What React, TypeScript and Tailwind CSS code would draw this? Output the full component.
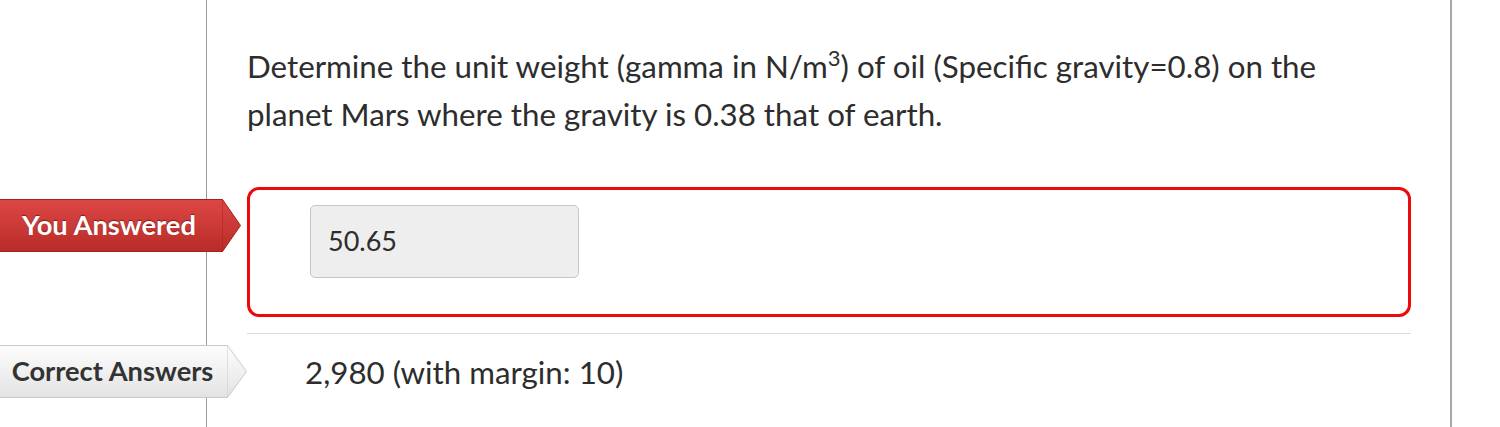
import React from "react";

function Badge({
  label,
  variant,
}: {
  label: string;
  variant: "red" | "gray";
}) {
  const red = variant === "red";
  return (
    <div className="flex h-[53px] items-stretch">
      <div
        className={
          red
            ? "flex w-[222px] items-center justify-center border-y border-[#a5201d] bg-gradient-to-b from-[#dc4744] to-[#b92c29] pr-[4px] text-[27.3px] font-bold text-white [text-shadow:0_-1px_1px_rgba(90,0,0,0.6)]"
            : "flex w-[233px] items-center justify-center border-y border-[#c9c9c9] bg-gradient-to-b from-[#fdfdfd] to-[#e3e3e3] pr-[2px] text-[27.3px] font-bold text-[#333333]"
        }
      >
        {label}
      </div>
      <svg
        width={red ? 19 : 20}
        height={53}
        viewBox={red ? "0 0 19 53" : "0 0 20 53"}
        className="block shrink-0"
      >
        <defs>
          <linearGradient id={`g-${variant}`} x1="0" y1="0" x2="0" y2="1">
            <stop offset="0" stopColor={red ? "#dc4744" : "#fdfdfd"} />
            <stop offset="1" stopColor={red ? "#b92c29" : "#e3e3e3"} />
          </linearGradient>
        </defs>
        {red ? (
          <polygon
            points="0,0.5 0.5,0.5 18.5,26.5 0.5,52.5 0,52.5"
            fill={`url(#g-${variant})`}
            stroke="#a5201d"
            strokeWidth="1"
          />
        ) : (
          <polygon
            points="0,0.5 0.5,0.5 19.5,26.5 0.5,52.5 0,52.5"
            fill={`url(#g-${variant})`}
            stroke="#c9c9c9"
            strokeWidth="1"
          />
        )}
      </svg>
    </div>
  );
}

export default function App() {
  return (
    <div className="flex h-[427px] w-[1500px] overflow-hidden bg-white font-['Lato','Noto_Sans',sans-serif] text-[#2d3b45]">
      <div className="w-[206px] shrink-0" />
      <div className="w-[1246px] shrink-0 border-l border-r-2 border-l-[#9a9a9a] border-r-[#a8a8a8] pl-[40px] pr-[39px]">
        <p className="pt-[42px] text-[31.3px] leading-[48px] text-[#2d2d2d]">
          Determine the unit weight (gamma in N/m
          <sup className="relative -top-[12px] text-[22px]">3</sup>) of oil (Specific
          gravity=0.8) on the
          <br />
          planet Mars where the gravity is 0.38 that of earth.
        </p>

        <div className="mt-[49px] flex items-start">
          <div className="relative z-10 -ml-[247px] w-[247px] shrink-0 pt-[12px]">
            <Badge label="You Answered" variant="red" />
          </div>
          <div className="h-[130px] flex-1 rounded-[12px] border-[3px] border-[#ec0b0b] pl-[60px] pt-[15px]">
            <div className="flex h-[73px] w-[269px] items-center rounded-[5px] border border-[#c6c6c6] bg-[#eeeeee] pl-[17px] text-[27px] text-[#2d2d2d]">
              50.65
            </div>
          </div>
        </div>

        <div className="mt-[16px] border-t border-[#dcdcdc]" />

        <div className="mt-[11px] flex items-start">
          <div className="relative z-10 -ml-[247px] w-[247px] shrink-0">
            <Badge label="Correct Answers" variant="gray" />
          </div>
          <div className="pl-[58px] pt-[3px] text-[31.3px] leading-[48px] text-[#2d2d2d]">
            2,980 (with margin: 10)
          </div>
        </div>
      </div>
    </div>
  );
}
